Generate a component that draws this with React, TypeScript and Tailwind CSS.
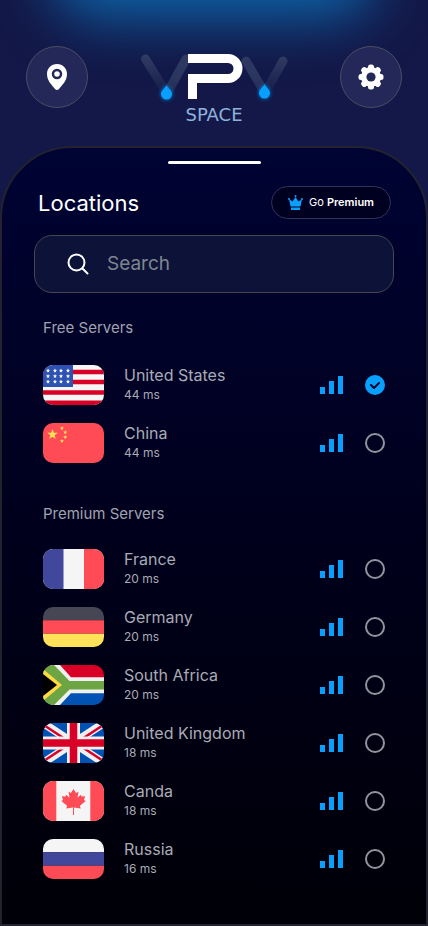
import { useState } from "react";
import type { ReactNode } from "react";

type Server = { name: string; ping: string; flag: ReactNode };

const US = (
  <>
    <path fill="#f5f5f5" d="M0 0h61v40H0z" />
    <path stroke="#d80027" strokeWidth="4.4" d="M0 7h61M0 17h61M0 27.500h61M0 37.800h61" />
    <path fill="#2e52b2" d="M0 0h30v22H0z" />
    {[5.5, 11, 16.5].map((y) =>
      [5, 12, 18, 25].map((x) => (
        <path key={`${x}-${y}`} fill="#f5f5f5" d={`M${x} ${y - 2}l.6 1.300 1.400.2-1 1 .2 1.500-1.200-.7-1.200.7.2-1.500-1-1 1.400-.2z`} />
      )),
    )}
  </>
);

const CHINA = (
  <>
    <path fill="#ff4b55" d="M0 0h61v40H0z" />
    <path fill="#ffe15a" d="M9.500 6l1.300 3.800h4l-3.200 2.400 1.200 3.800-3.300-2.300L6.200 16l1.200-3.800-3.200-2.400h4z" />
    <g fill="#ffe15a">
      <path d="M19 3.200l.6 1.200 1.300.2-1 1 .2 1.300-1.100-.6-1.200.6.200-1.300-1-1 1.300-.2z" />
      <path d="M22.300 7.200l.6 1.200 1.300.2-1 1 .2 1.300-1.100-.6-1.200.6.200-1.300-1-1 1.300-.2z" />
      <path d="M22.300 12l.6 1.200 1.300.2-1 1 .2 1.300-1.100-.6-1.200.6.200-1.300-1-1 1.300-.2z" />
      <path d="M19 16l.6 1.200 1.300.2-1 1 .2 1.300-1.100-.6-1.200.6.200-1.300-1-1 1.300-.2z" />
    </g>
  </>
);

const FRANCE = (
  <>
    <path fill="#f5f5f5" d="M0 0h61v40H0z" />
    <path fill="#41479b" d="M0 0h20.500v40H0z" />
    <path fill="#ff4b55" d="M41 0h20v40H41z" />
  </>
);

const GERMANY = (
  <>
    <path fill="#464655" d="M0 0h61v13.300H0z" />
    <path fill="#ff4b55" d="M0 13.300h61v13.400H0z" />
    <path fill="#ffe15a" d="M0 26.700h61V40H0z" />
  </>
);

const SOUTH_AFRICA = (
  <>
    <path fill="#d80027" d="M0 0h61v20H0z" />
    <path fill="#0052b4" d="M0 20h61v20H0z" />
    <path fill="#f0f0f0" d="M8 0h9l11 12.300h33v16H28L17 40H8L0 34V6z" />
    <path fill="#6da544" d="M0 0h11l15.500 16H61v8.500H26.500L11 40H0z" />
    <path fill="#ffda44" d="M0 4l19 16L0 36z" />
    <path fill="#000" d="M0 9l14 11L0 31z" />
  </>
);

const UK = (
  <>
    <path fill="#0052b4" d="M0 0h61v40H0z" />
    <path stroke="#f0f0f0" strokeWidth="8" d="M0 0l61 40M61 0L0 40" />
    <path stroke="#d80027" strokeWidth="2.500" d="M0 1.500l28 18.500M61 1.500L33 20M28 20L0 38.500M33 20l28 18.500" />
    <path stroke="#f0f0f0" strokeWidth="13" d="M30.500 0v40M0 20h61" />
    <path stroke="#d80027" strokeWidth="7.500" d="M30.500 0v40M0 20h61" />
  </>
);

const CANADA = (
  <>
    <path fill="#f5f5f5" d="M0 0h61v40H0z" />
    <path fill="#ff4b55" d="M0 0h13.300v40H0zM47.300 0H61v40H47.300z" />
    <path
      fill="#ff4b55"
      d="M30.500 8l-2.600 4-2.400-1.200 1 6-3.300-3-.8 1.800-3.600-.3 1.300 3.600-1.800 1 5.800 4.800-.8 2.700 6.700-1V34h1v-7.600l6.700 1-.8-2.700 5.800-4.800-1.800-1 1.300-3.600-3.600.3-.8-1.800-3.300 3 1-6-2.400 1.200z"
    />
  </>
);

const RUSSIA = (
  <>
    <path fill="#f5f5f5" d="M0 0h61v13.300H0z" />
    <path fill="#41479b" d="M0 13.300h61v13.400H0z" />
    <path fill="#ff4b55" d="M0 26.700h61V40H0z" />
  </>
);

const freeServers: Server[] = [
  { name: "United States", ping: "44 ms", flag: US },
  { name: "China", ping: "44 ms", flag: CHINA },
];

const premiumServers: Server[] = [
  { name: "France", ping: "20 ms", flag: FRANCE },
  { name: "Germany", ping: "20 ms", flag: GERMANY },
  { name: "South Africa", ping: "20 ms", flag: SOUTH_AFRICA },
  { name: "United Kingdom", ping: "18 ms", flag: UK },
  { name: "Canda", ping: "18 ms", flag: CANADA },
  { name: "Russia", ping: "16 ms", flag: RUSSIA },
];

function Logo() {
  return (
    <div className="flex flex-col items-center">
      <svg width="150" height="54" viewBox="139 50 150 54" fill="none" aria-hidden="true">
        <defs>
          <linearGradient id="arm" gradientUnits="userSpaceOnUse" x1="0" y1="54" x2="0" y2="94">
            <stop offset="0" stopColor="#2f3a62" />
            <stop offset="0.6" stopColor="#2b365e" />
            <stop offset="1" stopColor="#202a54" />
          </linearGradient>
          <linearGradient id="fade" gradientUnits="userSpaceOnUse" x1="0" y1="54" x2="0" y2="94">
            <stop offset="0" stopColor="#323d64" />
            <stop offset="0.4" stopColor="#263058" />
            <stop offset="1" stopColor="#141b4a" />
          </linearGradient>
          <filter id="glow" x="-100%" y="-100%" width="300%" height="300%">
            <feGaussianBlur stdDeviation="2" />
          </filter>
        </defs>
        <g strokeWidth="9" strokeLinecap="round">
          <path stroke="url(#fade)" d="M145.500 59l18 29" />
          <path stroke="url(#arm)" d="M186 59l-17 31" />
          <path stroke="url(#fade)" d="M283 61l-14 25" />
          <path stroke="url(#arm)" d="M246 61l16 27" />
        </g>
        <g fill="#08a0ff">
          <g filter="url(#glow)" opacity="0.8">
            <path d="M166.500 85c2 4 5.500 5.500 5.500 9a5.500 5.500 0 0 1-11 0c0-3.500 3.500-5 5.500-9z" />
            <path d="M264.500 84c2 4 5.500 5.500 5.500 9a5.500 5.500 0 0 1-11 0c0-3.500 3.500-5 5.500-9z" />
          </g>
          <path d="M166.500 85c2 4 5.500 5.500 5.500 9a5.500 5.500 0 0 1-11 0c0-3.500 3.500-5 5.500-9z" />
          <path d="M264.500 84c2 4 5.500 5.500 5.500 9a5.500 5.500 0 0 1-11 0c0-3.500 3.500-5 5.500-9z" />
        </g>
        <path stroke="#fff" strokeWidth="9" d="M188 58.500h40a10 10 0 0 1 0 20h-35.500V99" />
      </svg>
      <span className="font-['DejaVu_Sans',sans-serif] text-lg leading-[22px] text-[#8fb2dc]">SPACE</span>
    </div>
  );
}

function ServerRow({ server, selected, onSelect }: { server: Server; selected: boolean; onSelect: () => void }) {
  return (
    <label className="flex h-[58px] cursor-pointer items-center">
      <svg className="mr-5 h-10 w-[61px] shrink-0 rounded-[10px]" viewBox="0 0 61 40" aria-hidden="true">
        {server.flag}
      </svg>
      <span className="flex flex-1 flex-col text-[#a9abb5]">
        <span className="text-base leading-5">{server.name}</span>
        <span className="text-xs leading-5">{server.ping}</span>
      </span>
      <svg className="mr-5 h-[18px] w-6 shrink-0" viewBox="0 0 24 18" fill="#08a0ff" aria-hidden="true">
        <path d="M0 11h5v7H0zM9 5h5v13H9zM18 0h5v18h-5z" />
      </svg>
      <span className="grid size-[22px] place-items-center">
        <input
          type="radio"
          name="server"
          checked={selected}
          onChange={onSelect}
          className="col-start-1 row-start-1 size-5 appearance-none rounded-full border-2 border-[#92949d] checked:border-[#08a0ff] checked:bg-[#08a0ff]"
        />
        {selected && (
          <svg className="pointer-events-none col-start-1 row-start-1 size-5" viewBox="0 0 20 20" fill="none" aria-hidden="true">
            <path d="M6 10l3 3 5-5" stroke="#00032a" strokeWidth="2" strokeLinecap="round" strokeLinejoin="round" />
          </svg>
        )}
      </span>
    </label>
  );
}

export default function App() {
  const [selected, setSelected] = useState("United States");

  const list = (servers: Server[]) =>
    servers.map((server) => (
      <ServerRow
        key={server.name}
        server={server}
        selected={selected === server.name}
        onSelect={() => setSelected(server.name)}
      />
    ));

  const roundButton =
    "flex size-[62px] items-center justify-center rounded-full border border-[#4a4d62] bg-[#232858] text-white";

  return (
    <div className="relative isolate flex min-h-screen flex-col overflow-hidden bg-[#131848] font-[Inter,'Noto_Sans',sans-serif]">
      <div className="absolute inset-x-[12%] -top-20 -z-10 h-[98px] rounded-[48px] bg-[#0d65aa] blur-[28px]" />
      <header className="flex items-start justify-between px-[26px] pt-[46px]">
        <button type="button" aria-label="Location" className={roundButton}>
          <svg width="20" height="26" viewBox="0 0 20 26" aria-hidden="true">
            <path fill="#fff" d="M10 0C4 0 0 4.500 0 10c0 7 5 11 8 15q2 2 4 0c3-4 8-8 8-15C20 4.500 16 0 10 0z" />
            <circle cx="10" cy="10" r="4" fill="#fff" stroke="#232858" strokeWidth="2.500" />
          </svg>
        </button>
        <div className="mt-1">
          <Logo />
        </div>
        <button type="button" aria-label="Settings" className={roundButton}>
          <svg width="26" height="26" viewBox="-13 -13 26 26" aria-hidden="true">
            <g fill="#fff">
              <circle r="10" />
              {[0, 45, 90, 135, 180, 225, 270, 315].map((a) => (
                <rect key={a} x="-3" y="-12.500" width="6" height="7" rx="2.500" transform={`rotate(${a})`} />
              ))}
            </g>
            <circle r="4.600" fill="#232858" />
          </svg>
        </button>
      </header>

      <main className="mt-5 flex flex-1 flex-col rounded-t-[72px] border-2 border-[#23232f] bg-linear-to-b from-[#000433] via-[#00001c] to-[#000008] px-8 pb-8">
        <div className="mx-auto mt-[13px] h-[3px] w-[93px] rounded-full bg-white" />
        <div className="mt-[22px] flex h-[33px] items-center justify-between pr-[3px] pl-1">
          <h1 className="text-[22px] leading-7 font-normal text-white">Locations</h1>
          <button type="button" className="flex h-[33px] w-[120px] items-center justify-center gap-1.5 rounded-full border border-[#35325a] bg-[#000020] text-[11px] text-white">
            <svg width="15" height="15" viewBox="0 0 15 15" fill="#08a0ff" aria-hidden="true">
              <path d="M1 4l3.500 2.500L7.500 2l3 4.500L14 4l-1.500 7.500h-10zM3 12.500h9V15H3z" />
              <circle cx="7.500" cy="1" r="1" />
              <circle cx="1" cy="4" r="1" />
              <circle cx="14" cy="4" r="1" />
            </svg>
            <span>
              Go <b className="font-semibold">Premium</b>
            </span>
          </button>
        </div>

        <label className="mt-4 flex h-[58px] items-center gap-[18px] rounded-[18px] border border-[#45474f] bg-[#0d1238] pl-8">
          <svg className="shrink-0" width="22" height="22" viewBox="0 0 22 22" fill="none" stroke="#fff" strokeWidth="2" strokeLinecap="round" aria-hidden="true">
            <circle cx="9.500" cy="9.500" r="8" />
            <path d="M15.500 15.500l5 5" />
          </svg>
          <input
            type="search"
            aria-label="Search"
            placeholder="Search"
            className="min-w-0 flex-1 bg-transparent text-[19px] text-white outline-none placeholder:text-[#7e858f]"
          />
        </label>

        <section className="mt-6 pr-2 pl-[9px]">
          <h2 className="mb-[17px] text-[15px] leading-[22px] text-[#a1a3b0]">Free Servers</h2>
          {list(freeServers)}
        </section>
        <section className="mt-[31px] pr-2 pl-[9px]">
          <h2 className="mb-[15px] text-[15px] leading-[22px] text-[#a1a3b0]">Premium Servers</h2>
          {list(premiumServers)}
        </section>
      </main>
    </div>
  );
}
